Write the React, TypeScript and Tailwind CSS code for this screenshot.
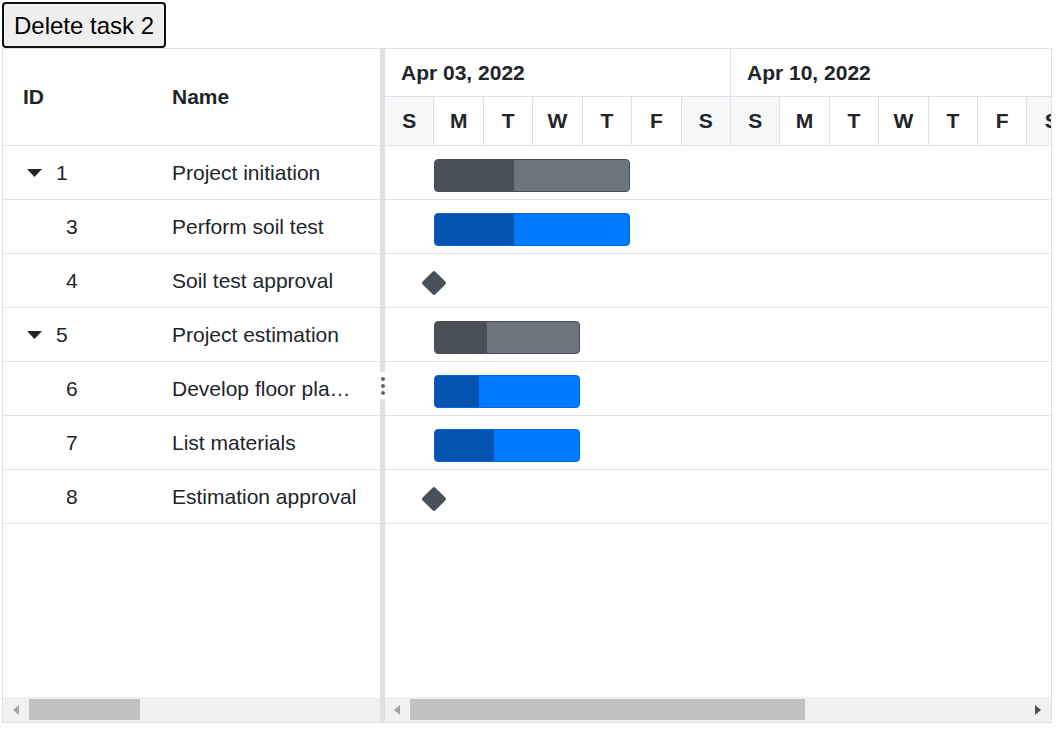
import React from 'react';

type Task = {
  id: number;
  name: string;
  parent?: boolean;
  milestone?: boolean;
  kind?: 'gray' | 'blue';
  width?: number;
  progress?: number;
};

const tasks: Task[] = [
  { id: 1, name: 'Project initiation', parent: true, kind: 'gray', width: 196, progress: 80 },
  { id: 3, name: 'Perform soil test', kind: 'blue', width: 196, progress: 80 },
  { id: 4, name: 'Soil test approval', milestone: true },
  { id: 5, name: 'Project estimation', parent: true, kind: 'gray', width: 146, progress: 53 },
  { id: 6, name: 'Develop floor plan for estimation', kind: 'blue', width: 146, progress: 45 },
  { id: 7, name: 'List materials', kind: 'blue', width: 146, progress: 60 },
  { id: 8, name: 'Estimation approval', milestone: true },
];

const days = ['S', 'M', 'T', 'W', 'T', 'F', 'S', 'S', 'M', 'T', 'W', 'T', 'F', 'S'];

function Caret() {
  return (
    <svg width="15" height="8" viewBox="0 0 15 8" className="shrink-0">
      <polygon points="0,0 15,0 7.5,8" fill="#212529" />
    </svg>
  );
}

function ArrowLeft({ color }: { color: string }) {
  return (
    <svg width="6" height="10" viewBox="0 0 6 10" className="shrink-0">
      <polygon points="6,0 6,10 0,5" fill={color} />
    </svg>
  );
}

function ArrowRight({ color }: { color: string }) {
  return (
    <svg width="6" height="10" viewBox="0 0 6 10" className="shrink-0">
      <polygon points="0,0 0,10 6,5" fill={color} />
    </svg>
  );
}

function Bar({ task }: { task: Task }) {
  if (task.milestone) {
    return <div className="ml-[40px] mt-[20px] h-[18px] w-[18px] rotate-45 rounded-[2px] bg-[#495057]" />;
  }
  const gray = task.kind === 'gray';
  return (
    <div
      className={
        gray
          ? 'ml-[49px] mt-[13px] flex h-[33px] overflow-hidden rounded-[4px] border border-[#4a5058] bg-[#6c757d]'
          : 'ml-[49px] mt-[13px] flex h-[33px] overflow-hidden rounded-[4px] border border-[#0067d6] bg-[#007bff]'
      }
      style={{ width: task.width }}
    >
      <div className={gray ? 'h-full bg-[#495057]' : 'h-full bg-[#0254b0]'} style={{ width: (task.progress ?? 0) - 1 }} />
    </div>
  );
}

export default function App() {
  return (
    <div className="p-[2px] font-['Liberation_Sans',Arial,sans-serif] text-[#212529]">
      <button
        type="button"
        className="h-[46px] rounded-[4px] border-2 border-[#111] bg-[#efefef] px-[10px] pt-[2px] text-[24px] leading-none text-black"
      >
        Delete task 2
      </button>

      <div className="flex h-[675px] w-[1050px] border border-[#dee2e6]">
        {/* grid pane */}
        <div className="flex w-[377px] shrink-0 flex-col">
          <div className="flex h-[97px] shrink-0 items-center border-b border-[#dee2e6] text-[21px] font-bold">
            <div className="w-[150px] pl-[20px]">ID</div>
            <div className="pl-[19px]">Name</div>
          </div>
          <div className="flex-1">
            {tasks.map((t) => (
              <div key={t.id} className="flex h-[54px] items-center border-b border-[#dee2e6] text-[21px]">
                <div className="flex w-[150px] items-center pl-[24px]">
                  {t.parent ? (
                    <>
                      <Caret />
                      <span className="ml-[14px]">{t.id}</span>
                    </>
                  ) : (
                    <span className="ml-[39px]">{t.id}</span>
                  )}
                </div>
                <div className="w-[227px] truncate pl-[19px] pr-[19px]">{t.name}</div>
              </div>
            ))}
          </div>
          <div className="flex h-[25px] shrink-0 items-center bg-[#f1f1f1]">
            <div className="ml-[10px]">
              <ArrowLeft color="#a3a3a3" />
            </div>
            <div className="ml-[10px] h-[21px] w-[111px] bg-[#c1c1c1]" />
          </div>
        </div>

        {/* splitter */}
        <div className="flex w-[5px] shrink-0 flex-col items-center justify-center bg-[#dee2e6]">
          <div className="flex h-[27px] w-full flex-col items-center justify-center gap-[3px] bg-white">
            <span className="h-[4px] w-[4px] rounded-full bg-[#5f6368]" />
            <span className="h-[4px] w-[4px] rounded-full bg-[#5f6368]" />
            <span className="h-[4px] w-[4px] rounded-full bg-[#5f6368]" />
          </div>
        </div>

        {/* chart pane */}
        <div className="flex min-w-0 flex-1 flex-col overflow-hidden">
          <div className="h-[97px] shrink-0 border-b border-[#dee2e6]">
            <div className="flex h-[48px] border-b border-[#dee2e6] text-[21px] font-bold">
              <div className="flex w-[346px] shrink-0 items-center border-r border-[#dee2e6] pl-[16px]">Apr 03, 2022</div>
              <div className="flex w-[346px] shrink-0 items-center pl-[16px]">Apr 10, 2022</div>
            </div>
            <div className="flex h-[48px] text-[21px] font-bold">
              {days.map((d, i) => (
                <div
                  key={i}
                  className={
                    i === 0 || i === 6 || i === 7 || i === 13
                      ? 'flex w-[49.43px] shrink-0 items-center justify-center border-r border-[#dee2e6] bg-[#f6f7f9]'
                      : 'flex w-[49.43px] shrink-0 items-center justify-center border-r border-[#dee2e6]'
                  }
                >
                  {d}
                </div>
              ))}
            </div>
          </div>
          <div className="flex-1">
            {tasks.map((t) => (
              <div key={t.id} className="flex h-[54px] items-start border-b border-[#dee2e6]">
                <Bar task={t} />
              </div>
            ))}
          </div>
          <div className="flex h-[25px] shrink-0 items-center bg-[#f1f1f1]">
            <div className="ml-[9px]">
              <ArrowLeft color="#a3a3a3" />
            </div>
            <div className="ml-[10px] h-[21px] w-[395px] bg-[#c1c1c1]" />
            <div className="ml-auto mr-[10px]">
              <ArrowRight color="#505050" />
            </div>
          </div>
        </div>
      </div>
    </div>
  );
}
